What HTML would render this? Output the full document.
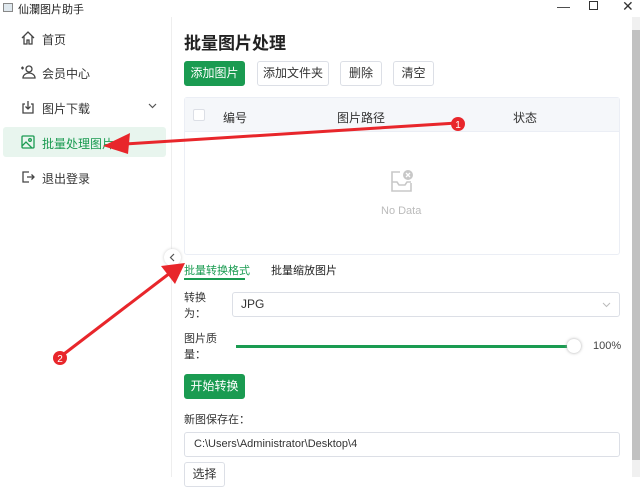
<!DOCTYPE html>
<html><head><meta charset="utf-8"><style>
*{margin:0;padding:0;box-sizing:border-box}
body{width:640px;height:477px;overflow:hidden;background:#fff;font-family:"Liberation Sans","Noto Sans CJK SC",sans-serif;font-size:12px;color:#333;position:relative}
.a{position:absolute}
.btn{position:absolute;border:1px solid #dcdfe6;border-radius:3px;background:#fff;font-size:12px;text-align:center;line-height:22px;color:#333}
.g{background:#1a9b51;border-color:#1a9b51;color:#fff}
.nav{position:absolute;left:20px;font-size:12px;color:#333}
</style></head><body>
<div class="a" style="left:3px;top:3px;width:10px;height:9px;border:1px solid #888;background:#dfe8ee"></div>
<div class="a" style="left:18px;top:1px;font-size:11px;color:#222">仙瀾图片助手</div>
<div class="a" style="left:557px;top:-1px;font-size:13px">—</div>
<div class="a" style="left:589px;top:1px;width:9px;height:9px;border:1px solid #333"></div>
<div class="a" style="left:622px;top:-2px;font-size:14px">✕</div>
<div class="a" style="left:171px;top:17px;width:1px;height:460px;background:#eee"></div>
<div class="a" style="left:632px;top:17px;width:8px;height:460px;background:#f0f0f0"></div>
<div class="a" style="left:632px;top:30px;width:8px;height:430px;background:#c1c1c1"></div>

<svg class="a" style="left:20px;top:30px" width="16" height="16" viewBox="0 0 16 16" fill="none" stroke="#444" stroke-width="1.3"><path d="M2 8L8 2l6 6M4 6v8h3v-4h2v4h3V6"/></svg>
<div class="nav" style="left:42px;top:31px">首页</div>
<svg class="a" style="left:20px;top:64px" width="16" height="16" viewBox="0 0 16 16" fill="none" stroke="#444" stroke-width="1.3"><circle cx="9" cy="5" r="3"/><path d="M3 14c0-3 3-5 6-5s6 2 6 5zM1 4h3M2.5 2.5v3"/></svg>
<div class="nav" style="left:42px;top:65px">会员中心</div>
<svg class="a" style="left:20px;top:99px" width="16" height="16" viewBox="0 0 16 16" fill="none" stroke="#444" stroke-width="1.3"><path d="M5 5H3v9h10V5h-2M8 2v8M5.5 7.5L8 10l2.5-2.5"/></svg>
<div class="nav" style="left:42px;top:100px">图片下载</div>
<svg class="a" style="left:148px;top:103px" width="9" height="6" viewBox="0 0 9 6" fill="none" stroke="#555" stroke-width="1.2"><path d="M1 1l3.5 3.5L8 1"/></svg>
<div class="a" style="left:3px;top:127px;width:163px;height:30px;background:#e8f5ee;border-radius:3px"></div>
<svg class="a" style="left:20px;top:134px" width="16" height="16" viewBox="0 0 16 16" fill="none" stroke="#1a9b51" stroke-width="1.3"><rect x="2" y="2" width="12" height="12" rx="1"/><circle cx="10" cy="6" r="1.3"/><path d="M2 12l4-4 6 6"/></svg>
<div class="nav" style="left:42px;top:135px;color:#1a9b51">批量处理图片</div>
<svg class="a" style="left:20px;top:169px" width="16" height="16" viewBox="0 0 16 16" fill="none" stroke="#444" stroke-width="1.3"><path d="M9 3H3v10h6M7 8h7M11.5 5.5L14 8l-2.5 2.5"/></svg>
<div class="nav" style="left:42px;top:170px">退出登录</div>

<div class="a" style="left:184px;top:29px;font-size:17px;font-weight:bold;color:#222">批量图片处理</div>
<div class="btn g" style="left:184px;top:61px;width:61px;height:25px">添加图片</div>
<div class="btn" style="left:257px;top:61px;width:72px;height:25px">添加文件夹</div>
<div class="btn" style="left:340px;top:61px;width:42px;height:25px">删除</div>
<div class="btn" style="left:393px;top:61px;width:41px;height:25px">清空</div>

<div class="a" style="left:184px;top:97px;width:436px;height:158px;border:1px solid #ebeef5;border-radius:3px"></div>
<div class="a" style="left:185px;top:98px;width:434px;height:34px;background:#f5f7fa;border-bottom:1px solid #ebeef5"></div>
<div class="a" style="left:193px;top:109px;width:12px;height:12px;border:1px solid #dcdfe6;background:#fff;border-radius:2px"></div>
<div class="a" style="left:223px;top:109px">编号</div>
<div class="a" style="left:337px;top:109px">图片路径</div>
<div class="a" style="left:513px;top:109px">状态</div>
<svg class="a" style="left:389px;top:168px" width="26" height="26" viewBox="0 0 26 26" fill="none" stroke="#c8c8c8" stroke-width="1.6"><path d="M11 4H3v19h19v-8M3 14h5l2 3h6l2-3h4"/><circle cx="19" cy="7" r="5" fill="#c8c8c8" stroke="none"/><path d="M17 5l4 4M21 5l-4 4" stroke="#fff" stroke-width="1.3"/></svg>
<div class="a" style="left:381px;top:205px;color:#bbb;font-size:11px">No Data</div>

<div class="a" style="left:164px;top:249px;width:17px;height:17px;border-radius:50%;background:#fff;box-shadow:0 0 3px #ccc"></div>
<svg class="a" style="left:169px;top:253px" width="6" height="9" viewBox="0 0 6 9" fill="none" stroke="#555" stroke-width="1.2"><path d="M5 1L1.5 4.5 5 8"/></svg>
<div class="a" style="left:184px;top:262px;color:#1a9b51;font-size:11px">批量转换格式</div>
<div class="a" style="left:184px;top:278px;width:61px;height:2px;background:#1a9b51"></div>
<div class="a" style="left:271px;top:262px;font-size:11px;color:#222">批量缩放图片</div>
<div class="a" style="left:184px;top:290px;font-size:11px;line-height:16px">转换<br>为：</div>
<div class="a" style="left:232px;top:292px;width:388px;height:25px;border:1px solid #dcdfe6;border-radius:3px;padding-left:8px;line-height:23px">JPG</div>
<svg class="a" style="left:602px;top:302px" width="9" height="6" viewBox="0 0 9 6" fill="none" stroke="#bbb" stroke-width="1"><path d="M1 1l3.5 3.5L8 1"/></svg>
<div class="a" style="left:184px;top:331px;font-size:11px;line-height:16px">图片质<br>量：</div>
<div class="a" style="left:236px;top:345px;width:340px;height:3px;background:#1a9b51"></div>
<div class="a" style="left:567px;top:339px;width:14px;height:14px;border-radius:50%;background:#fff;box-shadow:0 0 3px #aaa"></div>
<div class="a" style="left:593px;top:340px;font-size:11px;color:#444">100%</div>
<div class="btn g" style="left:184px;top:374px;width:61px;height:25px">开始转换</div>
<div class="a" style="left:184px;top:411px;font-size:11px">新图保存在：</div>
<div class="a" style="left:184px;top:432px;width:436px;height:25px;border:1px solid #dcdfe6;border-radius:3px;padding-left:9px;line-height:23px;font-size:11px">C:\Users\Administrator\Desktop\4</div>
<div class="btn" style="left:184px;top:462px;width:41px;height:25px">选择</div>

<svg class="a" style="left:0;top:0" width="640" height="477">
<path d="M457 123L125 144" stroke="#e8262b" stroke-width="3"/>
<path d="M103 146L130 133L128 154Z" fill="#e8262b"/>
<circle cx="458" cy="124" r="7" fill="#e8262b"/><text x="458" y="128" fill="#fff" font-size="10" text-anchor="middle" font-family="Liberation Sans">1</text>
<path d="M60 357L170 273" stroke="#e8262b" stroke-width="3"/>
<path d="M185 263L175 284L161 266Z" fill="#e8262b"/>
<circle cx="60" cy="358" r="7" fill="#e8262b"/><text x="60" y="362" fill="#fff" font-size="10" text-anchor="middle" font-family="Liberation Sans">2</text>
</svg>
</body></html>
